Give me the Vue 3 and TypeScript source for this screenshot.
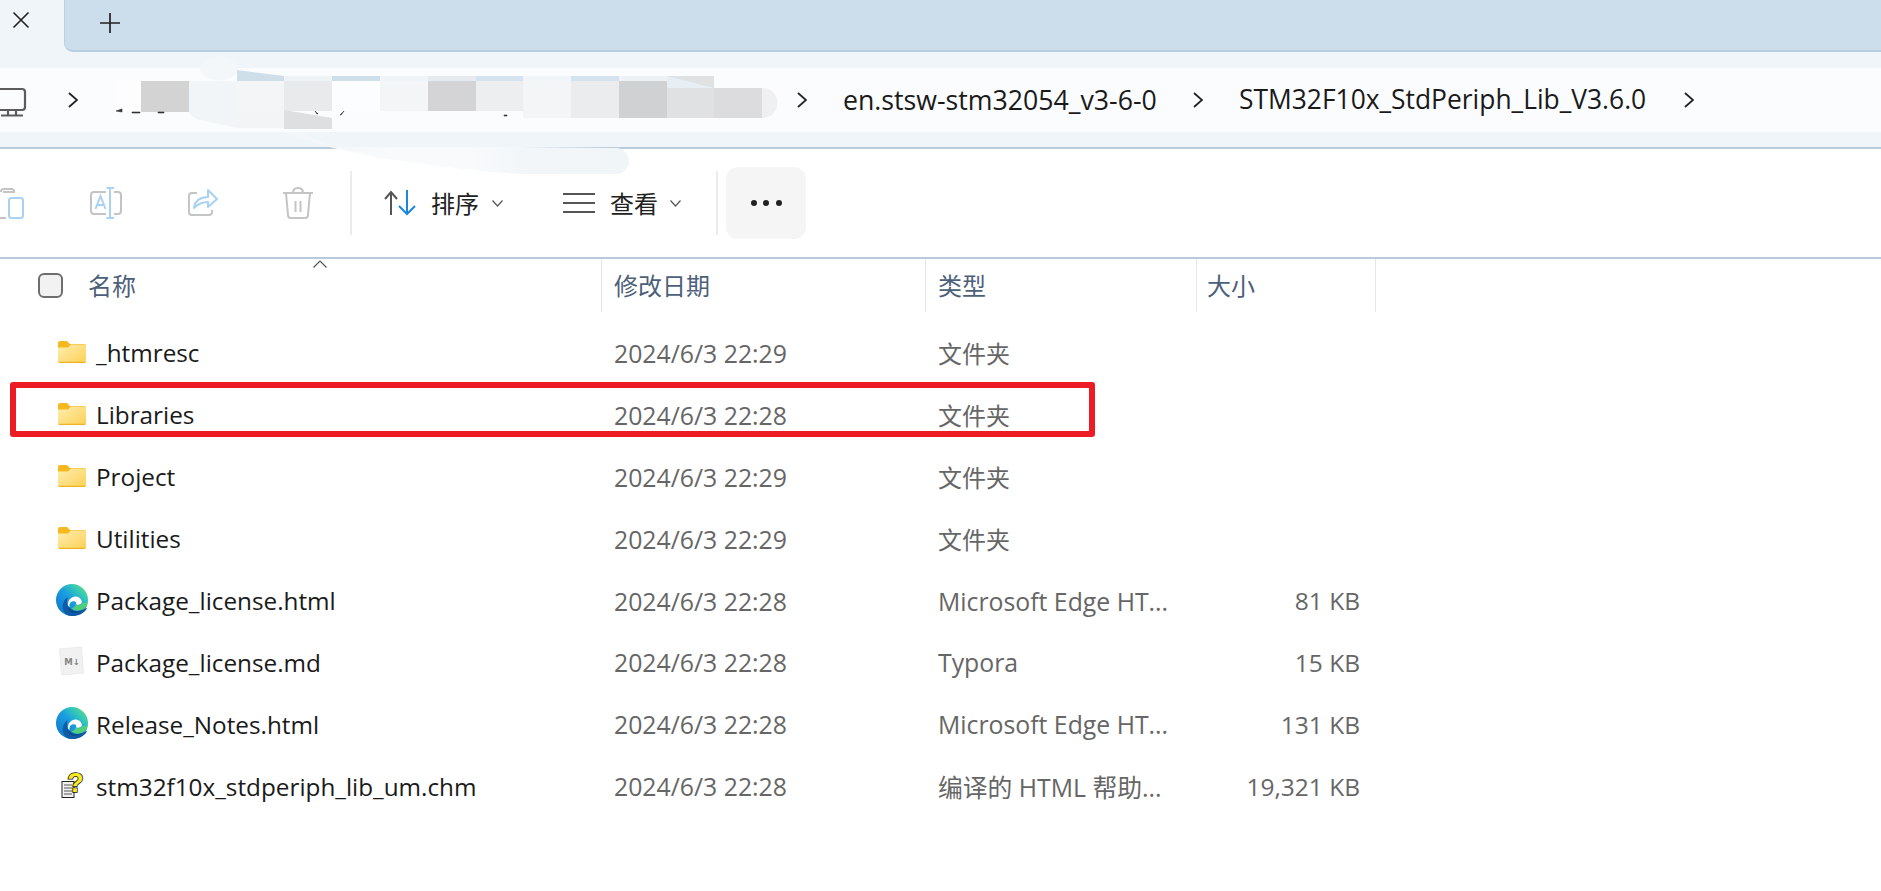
<script setup lang="ts">
interface Row { name: string; date: string; type: string; size: string; icon: 'folder' | 'edge' | 'md' | 'chm' }
const rows: Row[] = [
  { name: '_htmresc', date: '2024/6/3 22:29', type: '文件夹', size: '', icon: 'folder' },
  { name: 'Libraries', date: '2024/6/3 22:28', type: '文件夹', size: '', icon: 'folder' },
  { name: 'Project', date: '2024/6/3 22:29', type: '文件夹', size: '', icon: 'folder' },
  { name: 'Utilities', date: '2024/6/3 22:29', type: '文件夹', size: '', icon: 'folder' },
  { name: 'Package_license.html', date: '2024/6/3 22:28', type: 'Microsoft Edge HT...', size: '81 KB', icon: 'edge' },
  { name: 'Package_license.md', date: '2024/6/3 22:28', type: 'Typora', size: '15 KB', icon: 'md' },
  { name: 'Release_Notes.html', date: '2024/6/3 22:28', type: 'Microsoft Edge HT...', size: '131 KB', icon: 'edge' },
  { name: 'stm32f10x_stdperiph_lib_um.chm', date: '2024/6/3 22:28', type: '编译的 HTML 帮助...', size: '19,321 KB', icon: 'chm' },
]
const columns = [
  { label: '名称', cls: 'c-name' },
  { label: '修改日期', cls: 'c-date' },
  { label: '类型', cls: 'c-type' },
  { label: '大小', cls: 'c-size' },
]
// Mosaic blocks of the redacted part of the address bar: x, y, w, h, colour
const mosaic: [number, number, number, number, string][] = [
  [115, 81, 26, 30, '#fdfdfe'],
  [141, 81, 48, 31, '#d3d3d4'],
  [189, 81, 48, 32, '#f2f5f8'],
  [237, 81, 47, 30, '#f4f5f7'],
  [284, 76, 48, 35, '#e9eaec'],
  [332, 76, 48, 35, '#fcfdfe'],
  [380, 76, 48, 35, '#f4f5f7'],
  [428, 76, 48, 35, '#d4d4d6'],
  [476, 76, 47, 35, '#edeef0'],
  [523, 76, 48, 42, '#f4f5f7'],
  [571, 76, 48, 42, '#ebecee'],
  [619, 76, 48, 42, '#d0d1d3'],
  [667, 76, 47, 42, '#e0e1e2'],
  [714, 88, 48, 30, '#dcdcde'],
  [237, 111, 47, 17, '#f3f4f6'],
  [332, 111, 191, 21, '#fbfcfe'],
  [476, 111, 47, 7, '#fbfcfe'],
]
const tint: [number, number, number, number, string][] = [
  [332, 76, 48, 5, '#cfdfe9'],
  [380, 76, 48, 5, '#eff4f8'],
  [428, 76, 48, 5, '#e5ebf0'],
  [476, 76, 47, 5, '#d5e3ef'],
  [523, 76, 48, 5, '#f0f5f9'],
  [571, 76, 48, 5, '#d5e3ef'],
  [619, 76, 48, 5, '#edf2f6'],
]
</script>

<template>
  <div class="page">
    <div class="tabbar">
      <div class="tab">
        <svg width="18" height="18" viewBox="0 0 18 18" class="tab-x"><path d="M1.500 1.500 16.500 16.500M16.500 1.500 1.500 16.500" stroke="#222" stroke-width="1.600" fill="none" /></svg>
      </div>
      <div class="tab-rest">
        <svg width="20" height="20" viewBox="0 0 20 20" class="tab-plus"><path d="M0 10H20M10 0V20" stroke="#222" stroke-width="1.700" fill="none" /></svg>
      </div>
    </div>

    <div class="addr">
      <div class="crumbs">
        <svg class="monitor" width="27" height="30" viewBox="0 0 27 30"><path d="M-4 2H22a3 3 0 0 1 3 3V20a3 3 0 0 1-3 3H-4" stroke="#5c5c5c" stroke-width="2.200" fill="none" /><path d="M8 23V28M16 23V28M1 28.500H23" stroke="#5c5c5c" stroke-width="2.200" fill="none" /></svg>
        <svg class="chev c1" width="10" height="16" viewBox="0 0 10 16"><path d="M1 1 9 8 1 15" stroke="#222" stroke-width="1.800" fill="none" /></svg>
        <div class="hidden-path"></div>
        <svg class="chev" width="10" height="16" viewBox="0 0 10 16"><path d="M1 1 9 8 1 15" stroke="#222" stroke-width="1.800" fill="none" /></svg>
        <span class="crumb first">en.stsw-stm32054_v3-6-0</span>
        <svg class="chev c3" width="10" height="16" viewBox="0 0 10 16"><path d="M1 1 9 8 1 15" stroke="#222" stroke-width="1.800" fill="none" /></svg>
        <span class="crumb second">STM32F10x_StdPeriph_Lib_V3.6.0</span>
        <svg class="chev c4" width="10" height="16" viewBox="0 0 10 16"><path d="M1 1 9 8 1 15" stroke="#222" stroke-width="1.800" fill="none" /></svg>
      </div>
    </div>

    <div class="toolbar">
      <svg class="t-paste" width="24" height="32" viewBox="0 0 24 32">
        <path d="M-3 4H1a3 3 0 0 1 2-2H12a2.500 2.500 0 0 1 2 3H3M0 31H6" stroke="#c4c4c4" stroke-width="2" fill="none" />
        <rect x="9" y="11" width="14" height="20" rx="2.500" stroke="#a8d2f4" stroke-width="2" fill="none" />
      </svg>
      <svg class="t-rename" width="32" height="32" viewBox="0 0 32 32">
        <path d="M16 5H4a3 3 0 0 0-3 3V24a3 3 0 0 0 3 3H16M24 5H28a3 3 0 0 1 3 3V24a3 3 0 0 1-3 3H24" stroke="#c4c4c4" stroke-width="2" fill="none" />
        <path d="M16.500 1H24M20 1V31M16.500 31H24M5.500 22 10.500 9 15.500 22M7.500 18H13.500" stroke="#a8d2f4" stroke-width="2" fill="none" />
      </svg>
      <svg class="t-share" width="30" height="30" viewBox="0 0 30 30">
        <path d="M9 5H4a3 3 0 0 0-3 3V24a3 3 0 0 0 3 3H21a3 3 0 0 0 3-3V22" stroke="#c4c4c4" stroke-width="2" fill="none" />
        <path d="M6 20C7 13 12 9 20 9V2L29 11 20 19V14C14 14 10 16 6 20Z" stroke="#a8d2f4" stroke-width="2" fill="none" stroke-linejoin="round" />
      </svg>
      <svg class="t-trash" width="30" height="32" viewBox="0 0 30 32">
        <path d="M0 6H30M10 6C10 2 12 1 15 1S20 2 20 6M3 6 5 28a3 3 0 0 0 3 3H22a3 3 0 0 0 3-3L27 6M12.500 14V25M17.500 14V25" stroke="#c4c4c4" stroke-width="2" fill="none" />
      </svg>
      <div class="sep s1"></div>
      <svg class="t-sort" width="33" height="26" viewBox="0 0 33 26">
        <path d="M7 25V2M1 9 7 2 13 9" stroke="#555" stroke-width="2" fill="none" />
        <path d="M23 0V24M15 16 23 24 31 16" stroke="#1a86dd" stroke-width="2" fill="none" />
      </svg>
      <span class="t-label l-sort">排序</span>
      <svg class="t-chev" width="11" height="7" viewBox="0 0 11 7"><path d="M.5 .5 5.500 6 10.500 .5" stroke="#555" stroke-width="1.200" fill="none" /></svg>
      <svg class="t-view" width="32" height="22" viewBox="0 0 32 22"><path d="M0 2H32M0 11H32M0 20H32" stroke="#555" stroke-width="2" fill="none" /></svg>
      <span class="t-label l-view">查看</span>
      <svg class="t-chev c-view" width="11" height="7" viewBox="0 0 11 7"><path d="M.5 .5 5.500 6 10.500 .5" stroke="#555" stroke-width="1.200" fill="none" /></svg>
      <div class="sep s2"></div>
      <div class="more"><i></i><i></i><i></i></div>
    </div>

    <div class="header">
      <div v-for="c in columns" :key="c.label" class="h-cell" :class="c.cls">
        <span v-if="c.cls === 'c-name'" class="check"></span>
        <span>{{ c.label }}</span>
      </div>
      <svg class="sort-caret" width="14" height="8" viewBox="0 0 14 8"><path d="M.5 7.500 7 1 13.500 7.500" stroke="#555" stroke-width="1.200" fill="none" /></svg>
    </div>

    <div class="list">
      <div v-for="r in rows" :key="r.name" class="row">
        <div class="c-name cell">
          <span class="icon-box">
            <svg v-if="r.icon === 'folder'" class="i-folder" width="28" height="22" viewBox="0 0 28 22">
              <defs>
                <linearGradient id="fold" x1="0" y1="0" x2="1" y2="1">
                  <stop offset="0" stop-color="#fdeeb0" />
                  <stop offset="1" stop-color="#fdd055" />
                </linearGradient>
              </defs>
              <path d="M0 2a2 2 0 0 1 2-2H9l3 3H26a2 2 0 0 1 2 2V8H0Z" fill="#f6b81f" />
              <path d="M0 6.500H10L13 3.500H26a2 2 0 0 1 2 2V20a2 2 0 0 1-2 2H2a2 2 0 0 1-2-2Z" fill="url(#fold)" />
              <path d="M0 20.800H28V20a2 2 0 0 1-2 2H2a2 2 0 0 1-2-2Z" fill="#efb220" />
            </svg>
            <svg v-else-if="r.icon === 'edge'" width="32" height="32" viewBox="0 0 32 32">
              <defs>
                <linearGradient id="edgeA" x1="0" y1="1" x2="1" y2="0">
                  <stop offset="0" stop-color="#0a72c8" />
                  <stop offset=".5" stop-color="#1a9de0" />
                  <stop offset=".75" stop-color="#35cbb5" />
                  <stop offset="1" stop-color="#7ee05f" />
                </linearGradient>
              </defs>
              <circle cx="16" cy="16" r="16" fill="url(#edgeA)" />
              <path d="M7 25C6 20 8 15 12 13 10 17 11 22 14 25 17 28 22 28 27 25.500 28.500 25 30 24 31 24.500 28 29.500 22.500 32 16 32 11 32 8 29 7 25Z" fill="#0e5aa5" />
              <path d="M12 22C11.500 15.500 16 12 20 12.500 23.500 13 25.800 15.500 25.800 18 25.800 19.800 24 20.800 22 20.800 20.500 20.800 19.800 20.200 20 19.500 20.500 18 19.500 17.200 18 17.200 15 17 13 19 13.500 23.500Z" fill="#fff" />
              <path d="M20 20C20.500 21 21.500 21.500 23 21.300 25 21 26.300 20 26.500 18.500 27.500 19.800 30.500 19 31.800 17.500 31.500 21 29.500 24 27 25.500 22 27.800 17.500 26.500 15.500 24 17.500 24 19.500 22.500 20 20Z" fill="#4fcf7a" />
              <path d="M13.500 23.500C15 26.500 20 28.500 27 25.500 24 28.500 19.500 29.500 16 28.500 13 27.500 11.500 25 12 22Z" fill="#0b4c93" />
            </svg>
            <svg v-else-if="r.icon === 'md'" class="i-md" width="27" height="30" viewBox="0 0 27 30">
              <rect x="2.500" y="2" width="22" height="26" fill="#f1f1f1" stroke="#ececec" transform="rotate(-5 13.500 15)" />
              <text x="14" y="18.500" text-anchor="middle" class="md-text">M↓</text>
            </svg>
            <svg v-else class="i-chm" width="24" height="27" viewBox="0 0 24 27">
              <rect x="1" y="9.500" width="12" height="16" fill="#f2f2f2" stroke="#222" />
              <path d="M3 13H11M3 16H11M3 19H11M3 22H11" stroke="#555" stroke-width="1" fill="none" />
              <text x="14.500" y="20" text-anchor="middle" class="chm-q">?</text>
            </svg>
          </span>
          <span class="file">{{ r.name }}</span>
        </div>
        <div class="c-date cell muted">{{ r.date }}</div>
        <div class="c-type cell muted" :class="{ folder: r.icon === 'folder' }">{{ r.type }}</div>
        <div class="c-size cell muted size">{{ r.size }}</div>
      </div>
    </div>

    <div class="marker"></div>

    <svg class="redact" width="1881" height="891" viewBox="0 0 1881 891">
      <defs>
        <linearGradient id="smear" gradientUnits="userSpaceOnUse" x1="284" y1="0" x2="628" y2="0">
          <stop offset="0" stop-color="#f2f6f9" />
          <stop offset=".3" stop-color="#f8fafc" />
          <stop offset=".55" stop-color="#f8fafc" />
          <stop offset=".7" stop-color="#f2f6f9" />
          <stop offset="1" stop-color="#f0f5f8" />
        </linearGradient>
      </defs>
      <path d="M284 132 333 148 380 158 430 165 490 172 520 174H616a13 13 0 0 0 0-26L520 147H333L300 132Z" fill="url(#smear)" />
      <rect v-for="(m, i) in mosaic" :key="'m' + i" :x="m[0]" :y="m[1]" :width="m[2]" :height="m[3]" :fill="m[4]" />
      <rect v-for="(m, i) in tint" :key="'t' + i" :x="m[0]" :y="m[1]" :width="m[2]" :height="m[3]" :fill="m[4]" />
      <path d="M237 70 284 76V81H237Z" fill="#cfdfe9" />
      <path d="M284 76H332V81H284Z" fill="#eef3f7" />
      <path d="M667 76 714 88H667Z" fill="#e8eff4" />
      <path d="M284 110 332 118V129H284Z" fill="#dedfe1" />
      <path d="M237 72a19 12 0 1 0-36 0 19 12 0 0 0 36 0Z" fill="#f3f7fa" />
      <path d="M190 114C193 107 205 107 237 107V128C215 122 195 122 190 114Z" fill="#f2f5f8" />
      <path d="M762 88H763a14.500 15 0 0 1 0 30H762Z" fill="#f0f0f1" />
      <path d="M116 111l6-2v3ZM132 112h8v1h-8ZM158 112h6v1h-6ZM315 111l3 3h-1ZM344 111l-3 4h-1ZM504 115h3v1h-3Z" fill="#333" stroke="#333" stroke-width=".6" />
    </svg>
  </div>
</template>

<style scoped>
.page {
  position: relative;
  width: 1881px;
  height: 891px;
  overflow: hidden;
  background: #fff;
  font-family: "Open Sans", "Noto Sans CJK SC", sans-serif;
  color: #1a1a1a;
}
.tabbar {
  display: flex;
  height: 52px;
  background: #f0f5f9;
}
.tab {
  width: 64px;
  position: relative;
}
.tab-x {
  margin: 11px 0 0 12px;
  display: block;
}
.tab-rest {
  flex: 1;
  background: #ccdeeb;
  border-left: 1px solid #bcd0e0;
  border-bottom: 2px solid #b9cfe0;
  border-bottom-left-radius: 9px;
}
.tab-plus {
  display: block;
  margin: 13px 0 0 35px;
}
.addr {
  height: 97px;
  box-sizing: border-box;
  padding-top: 16px;
  background: #f0f5f9;
  border-bottom: 2px solid #b9cadb;
}
.crumbs {
  height: 64px;
  background: #fbfcfe;
  display: flex;
  align-items: center;
  font-size: 26.400px;
}
.monitor {
  flex: none;
  width: 27px;
  margin-top: 3px;
}
.chev {
  flex: none;
}
.c1 {
  margin-left: 41px;
}
.hidden-path {
  width: 719px;
  flex: none;
}
.crumb {
  white-space: nowrap;
  flex: none;
  position: relative;
  top: -1px;
}
.first {
  width: 314px;
  margin-left: 36px;
  font-size: 26.700px;
}
.c3 {
  margin-left: 36px;
}
.second {
  width: 404px;
  margin-left: 36px;
}
.c4 {
  margin-left: 41px;
}
.toolbar {
  height: 108px;
  display: flex;
  align-items: center;
  font-size: 24px;
}
.toolbar svg {
  flex: none;
}
.t-rename {
  margin-left: 66px;
}
.t-share {
  margin-left: 66px;
}
.t-trash {
  margin-left: 65px;
}
.sep {
  width: 2px;
  height: 64px;
  background: #ececec;
  flex: none;
}
.s1 {
  margin-left: 37px;
}
.t-sort {
  margin-left: 32px;
}
.t-label {
  width: 48px;
  flex: none;
  color: #222;
  line-height: 32px;
  padding-top: 2px;
}
.l-sort {
  margin-left: 14px;
}
.l-view {
  margin-left: 15px;
}
.t-chev {
  margin-left: 13px;
}
.c-view {
  margin-left: 12px;
}
.t-view {
  margin-left: 60px;
}
.s2 {
  margin-left: 35px;
}
.more {
  margin-left: 8px;
  width: 80px;
  height: 72px;
  border-radius: 12px;
  background: #f5f5f5;
  display: flex;
  align-items: center;
  justify-content: center;
  gap: 6.500px;
  flex: none;
}
.more i {
  width: 6px;
  height: 6px;
  border-radius: 50%;
  background: #222;
}
.header {
  position: relative;
  display: flex;
  height: 55px;
  box-sizing: border-box;
  border-top: 2px solid #b9cadb;
  font-size: 24px;
  color: #4c607a;
}
.h-cell {
  display: flex;
  align-items: center;
  height: 53px;
  box-sizing: border-box;
  border-right: 1px solid #e5e5e5;
  padding-bottom: 2px;
}
.h-cell.c-name {
  padding-left: 38px;
}
.h-cell.c-date {
  padding-left: 12px;
}
.h-cell.c-type {
  padding-left: 12px;
}
.h-cell.c-size {
  padding-left: 10px;
  width: 179px;
}
.check {
  width: 25px;
  height: 25px;
  box-sizing: border-box;
  border: 2px solid #6e6e6e;
  border-radius: 6px;
  background: #f2f2f2;
  margin-right: 25px;
  flex: none;
  position: relative;
  top: 1px;
}
.sort-caret {
  position: absolute;
  left: 313px;
  top: 1px;
}
.c-name {
  width: 602px;
  flex: none;
}
.c-date {
  width: 324px;
  flex: none;
}
.c-type {
  width: 271px;
  flex: none;
}
.c-size {
  width: 163px;
  flex: none;
}
.list {
  padding-top: 9px;
  font-size: 24.500px;
}
.row {
  display: flex;
  height: 61.900px;
  align-items: center;
}
.cell {
  white-space: nowrap;
  display: flex;
  align-items: center;
}
.file {
  font-size: 24.300px;
  padding-top: 2px;
}
.row .c-name {
  padding-left: 56px;
  box-sizing: border-box;
}
.icon-box {
  width: 40px;
  height: 34px;
  flex: none;
  display: flex;
  align-items: center;
}
.icon-box svg {
  flex: none;
  overflow: visible;
}
.i-folder,
.i-md {
  margin-left: 2px;
}
.i-chm {
  margin-left: 5px;
}
.row .c-date {
  padding-left: 12px;
  box-sizing: border-box;
  font-size: 24.800px;
}
.row .c-type {
  padding-left: 12px;
  box-sizing: border-box;
  font-size: 24.800px;
}
.row .c-type.folder {
  font-size: 24px;
}
.muted {
  color: #666;
  padding-top: 2px;
}
.size {
  justify-content: flex-end;
}
.md-text {
  font: bold 8.500px "DejaVu Sans", sans-serif;
  fill: #868686;
}
.chm-q {
  font: bold 27px "Liberation Sans", sans-serif;
  fill: #f7ea1e;
  stroke: #111;
  stroke-width: 1.600px;
  paint-order: stroke;
}
.marker {
  position: absolute;
  left: 10px;
  top: 382px;
  width: 1085px;
  height: 55px;
  box-sizing: border-box;
  border: 6px solid #ed1c24;
  border-radius: 3px;
}
.redact {
  position: absolute;
  left: 0;
  top: 0;
  pointer-events: none;
}
</style>
<style>
html, body {
  margin: 0;
  background: #fff;
  overflow: hidden;
}
</style>
